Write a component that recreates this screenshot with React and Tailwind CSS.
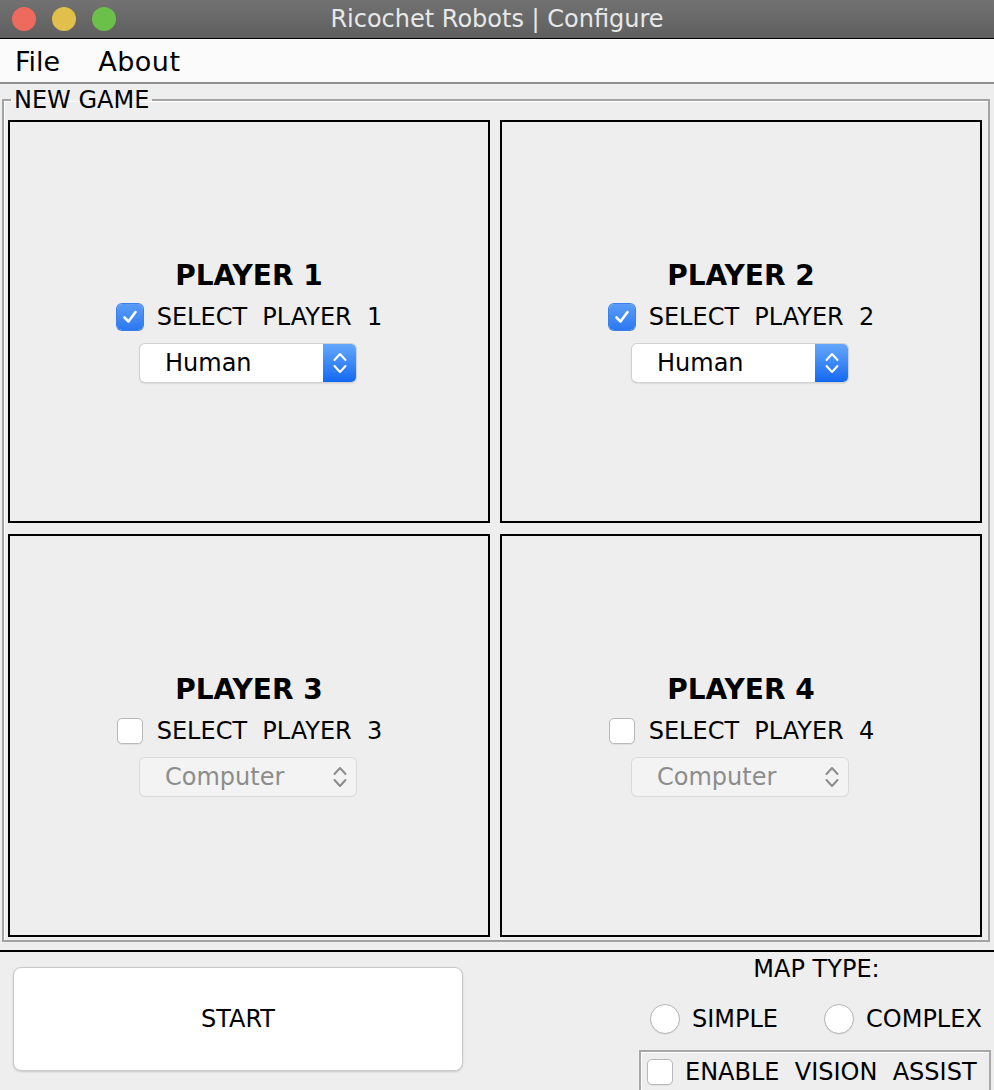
import React from "react";

const F = { fontFamily: '"DejaVu Sans", "Liberation Sans", sans-serif' };

function Checkbox({ checked }) {
  if (checked) {
    return (
      <div className="w-[26px] h-[26px] rounded-[5px] bg-gradient-to-b from-[#5a9cf8] to-[#2a78f0] flex items-center justify-center shrink-0 shadow-[0_0_0_1px_#3a7ee8]">
        <svg width="18" height="18" viewBox="0 0 18 18">
          <path d="M3.5 9.5 L7.5 13.5 L14.5 4" fill="none" stroke="white" strokeWidth="2.6" strokeLinecap="round" strokeLinejoin="round" />
        </svg>
      </div>
    );
  }
  return <div className="w-[26px] h-[26px] rounded-[5px] bg-white border border-[#b9b9b9] shrink-0 shadow-[0_1px_1px_rgba(0,0,0,0.06)]" />;
}

function Chevrons({ color }) {
  return (
    <svg width="16" height="28" viewBox="0 0 16 28">
      <path d="M2.5 11 L8 5 L13.5 11" fill="none" stroke={color} strokeWidth="2" strokeLinecap="round" strokeLinejoin="round" />
      <path d="M2.5 17 L8 23 L13.5 17" fill="none" stroke={color} strokeWidth="2" strokeLinecap="round" strokeLinejoin="round" />
    </svg>
  );
}

function Combo({ value, enabled }) {
  if (enabled) {
    return (
      <div className="w-[216px] h-[38px] rounded-[5px] bg-white shadow-[0_0_0_1px_#d0d0d0,0_1px_2px_rgba(0,0,0,0.25)] flex items-stretch overflow-hidden">
        <div className="flex-1 flex items-center pl-[25px] text-[24px] text-black" style={F}>{value}</div>
        <div className="w-[33px] bg-gradient-to-b from-[#63a6fb] to-[#0f68f2] flex items-center justify-center">
          <Chevrons color="white" />
        </div>
      </div>
    );
  }
  return (
    <div className="w-[216px] h-[38px] rounded-[5px] bg-[#f3f3f3] shadow-[0_0_0_1px_#dadada,0_1px_1px_rgba(0,0,0,0.08)] flex items-stretch">
      <div className="flex-1 flex items-center pl-[25px] text-[24px] text-[#8c8c8c]" style={F}>{value}</div>
      <div className="w-[33px] flex items-center justify-center">
        <Chevrons color="#8c8c8c" />
      </div>
    </div>
  );
}

function Panel({ n, checked, value }) {
  return (
    <div className="h-[403px] border-2 border-black flex flex-col items-center justify-center">
      <div className="text-[28px] font-bold leading-[32px] text-black -mt-[2px]" style={F}>PLAYER {n}</div>
      <div className="flex items-center gap-[14px] mt-[10px] ml-[1px]">
        <Checkbox checked={checked} />
        <span className="text-[24px] leading-[30px] whitespace-pre text-black" style={F}>{`SELECT  PLAYER  ${n}`}</span>
      </div>
      <div className="mt-[12px] -ml-[2px]">
        <Combo value={value} enabled={checked} />
      </div>
    </div>
  );
}

function Radio({ label }) {
  return (
    <div className="flex items-center gap-[12px]">
      <div className="w-[30px] h-[30px] rounded-full bg-white border border-[#b5b5b5] shadow-[0_1px_1px_rgba(0,0,0,0.06)]" />
      <span className="text-[24px] text-black" style={F}>{label}</span>
    </div>
  );
}

export default function App() {
  return (
    <div className="w-[994px] h-[1090px] bg-[#eeeeee] overflow-hidden flex flex-col" style={F}>
      {/* Title bar */}
      <div className="h-[39px] shrink-0 bg-gradient-to-b from-[#727272] to-[#5f5f5f] border-b border-black flex items-center relative">
        <div className="flex items-center gap-[16px] pl-[12px]">
          <div className="w-[24px] h-[24px] rounded-full bg-[#ee6a5f]" />
          <div className="w-[24px] h-[24px] rounded-full bg-[#e0bf4b]" />
          <div className="w-[24px] h-[24px] rounded-full bg-[#6bc04a]" />
        </div>
        <div className="absolute inset-0 flex items-center justify-center text-[24px] text-[#e8e8e8] pb-[1px]" style={F}>
          Ricochet Robots | Configure
        </div>
      </div>
      {/* Menu bar */}
      <div className="h-[45px] shrink-0 bg-[#fbfbfb] border-b-2 border-[#8e8e8e] flex items-center text-[27px] text-black pt-[4px]" style={F}>
        <span className="ml-[15px]">File</span>
        <span className="ml-[38px] tracking-[0.5px]">About</span>
      </div>
      {/* Fieldset */}
      <fieldset className="ml-[2px] mr-[4px] mt-[2px] border-2 border-[#a3a3a3] shadow-[inset_1px_1px_0_#ffffff] pl-[4px] pt-[6px] pb-[3px]">
        <legend className="ml-[3px] px-[3px] text-[24px] leading-[28px] text-black" style={F}>NEW GAME</legend>
        <div className="grid grid-cols-[482px_482px] gap-x-[10px] gap-y-[11px]">
          <Panel n={1} checked value="Human" />
          <Panel n={2} checked value="Human" />
          <Panel n={3} checked={false} value="Computer" />
          <Panel n={4} checked={false} value="Computer" />
        </div>
      </fieldset>
      <div className="mt-[8px] h-[2px] bg-black shrink-0" />
      {/* Bottom */}
      <div className="flex justify-between flex-1">
        <div className="ml-[13px] mt-[15px] w-[450px] h-[104px] rounded-[8px] bg-white border border-[#c9c9c9] shadow-[0_1px_2px_rgba(0,0,0,0.15)] flex items-center justify-center text-[24px] text-black" style={F}>
          START
        </div>
        <div className="w-[355px] flex flex-col items-center">
          <div className="mt-[2px] text-[24px] leading-[30px] text-black" style={F}>MAP TYPE:</div>
          <div className="mt-[17px] flex items-center gap-[46px] w-full pl-[11px]">
            <Radio label="SIMPLE" />
            <Radio label="COMPLEX" />
          </div>
          <div className="mt-[13px] self-start w-[352px] h-[50px] border-2 border-[#a8a8a8] shadow-[inset_1px_1px_0_#ffffff] flex items-center gap-[12px] pl-[6px] pb-[6px]">
            <Checkbox checked={false} />
            <span className="text-[24px] whitespace-pre text-black" style={F}>{"ENABLE  VISION  ASSIST"}</span>
          </div>
        </div>
      </div>
    </div>
  );
}
